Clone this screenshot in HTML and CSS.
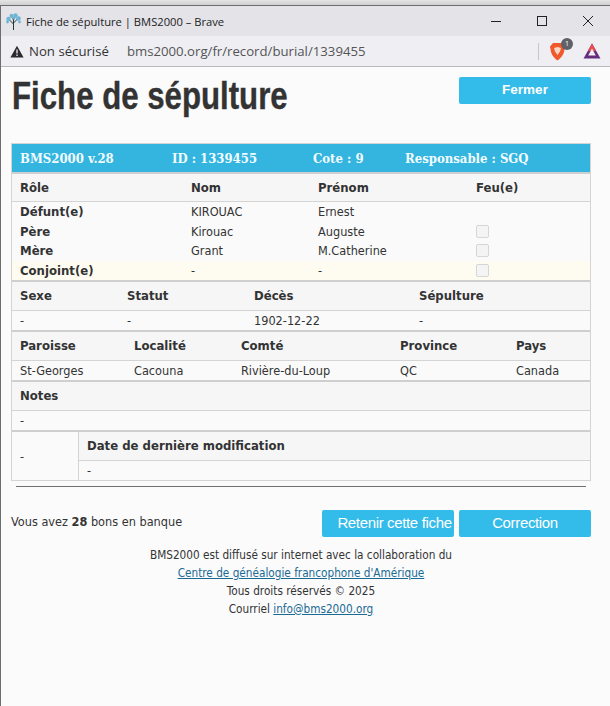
FILE: index.html
```html
<!DOCTYPE html>
<html lang="fr">
<head>
    <meta charset="UTF-8">
    <meta name="viewport" content="width=device-width, initial-scale=1.0">
    <title>Fiche de sépulture | BMS2000</title>
    <link rel="stylesheet" href="styles.css">
</head>
<body>
    <div class="window">
        <div class="titlebar">
            <svg class="favicon" width="17" height="17" viewBox="0 0 17 17">
                <path d="M8.5 17V7M8.5 11L4.5 7M8.5 10L12.5 6M8.5 7L6.5 3.5M8.5 7L10.5 3" stroke="#26343a" stroke-width="1" fill="none"/>
                <g fill="#6fb5d6">
                    <circle cx="3.5" cy="6" r="2.2"/><circle cx="6.5" cy="2.8" r="2"/><circle cx="10.5" cy="2.5" r="2.2"/>
                    <circle cx="13.5" cy="5.5" r="2.3"/><circle cx="2.5" cy="9" r="1.4"/><circle cx="14.5" cy="9" r="1.4"/>
                    <circle cx="8.5" cy="5" r="1.5"/>
                </g>
            </svg>
            <span class="window-title">Fiche de sépulture | BMS2000 – Brave</span>
            <div class="controls">
                <svg width="12" height="12" viewBox="0 0 12 12"><path d="M1 6.5H11" stroke="#222" stroke-width="1"/></svg>
                <svg width="12" height="12" viewBox="0 0 12 12"><rect x="1.5" y="1.5" width="9" height="9" fill="none" stroke="#222" stroke-width="1"/></svg>
                <svg width="12" height="12" viewBox="0 0 12 12"><path d="M1 1L11 11M11 1L1 11" stroke="#222" stroke-width="1"/></svg>
            </div>
        </div>
        <div class="addressbar">
            <svg class="warning" width="14" height="13" viewBox="0 0 14 13"><path d="M7 0.8L13.6 12.4H0.4Z" fill="#2b2b2e"/><path d="M7 4.5V8.5M7 9.6V11" stroke="#eeeef3" stroke-width="1.3"/></svg>
            <span class="not-secure">Non sécurisé</span>
            <span class="url">bms2000.org/fr/record/burial/1339455</span>
            <div class="extensions">
                <span class="divider"></span>
                <div class="shield-wrap">
                    <svg width="17" height="19" viewBox="0 0 17 19"><path d="M4 1H13L16 4.5L15 10C14 14 11 16.5 8.5 18.5C6 16.5 3 14 2 10L1 4.5Z" fill="#f0592b"/><path d="M5 6L8.5 5L12 6L11 9.5L8.5 13L6 9.5Z" fill="#fbd5c6"/></svg>
                    <span class="shield-badge">1</span>
                </div>
                <svg class="bat" width="18" height="16" viewBox="0 0 18 16">
                    <path d="M9 0.5L17.5 15.5H0.5Z" fill="#662d7f"/>
                    <path d="M9 0.5L13.2 8H4.8Z" fill="#e94b4f"/>
                    <path d="M9 5.5L12.8 12.5H5.2Z" fill="#eeeef3"/>
                </svg>
            </div>
        </div>
        <div class="page">
            <div class="page-head">
                <h1>Fiche de sépulture</h1>
                <a class="btn btn-bold">Fermer</a>
            </div>

            <div class="record">
                <div class="record-bar">
                    <span class="bar-a">BMS2000 v.28</span>
                    <span class="bar-b">ID : 1339455</span>
                    <span class="bar-c">Cote : 9</span>
                    <span>Responsable : SGQ</span>
                </div>

                <div class="cols people head">
                    <b>Rôle</b><b>Nom</b><b>Prénom</b><b>Feu(e)</b>
                </div>
                <div class="cols people row row-tall">
                    <b>Défunt(e)</b><span>KIROUAC</span><span>Ernest</span><span></span>
                </div>
                <div class="cols people row">
                    <b>Père</b><span>Kirouac</span><span>Auguste</span><span><i class="check"></i></span>
                </div>
                <div class="cols people row row-tall">
                    <b>Mère</b><span>Grant</span><span>M.Catherine</span><span><i class="check"></i></span>
                </div>
                <div class="cols people row spouse">
                    <b>Conjoint(e)</b><span>-</span><span>-</span><span><i class="check"></i></span>
                </div>

                <div class="cols dates head head-low">
                    <b>Sexe</b><b>Statut</b><b>Décès</b><b>Sépulture</b>
                </div>
                <div class="cols dates row">
                    <span>-</span><span>-</span><span>1902-12-22</span><span>-</span>
                </div>

                <div class="cols places head head-low">
                    <b>Paroisse</b><b>Localité</b><b>Comté</b><b>Province</b><b>Pays</b>
                </div>
                <div class="cols places row">
                    <span>St-Georges</span><span>Cacouna</span><span>Rivière-du-Loup</span><span>QC</span><span>Canada</span>
                </div>

                <div class="cols head head-low"><b>Notes</b></div>
                <div class="cols row"><span>-</span></div>

                <div class="modified">
                    <div class="modified-side">-</div>
                    <div class="modified-main">
                        <div class="cols head head-low"><b>Date de dernière modification</b></div>
                        <div class="cols row"><span>-</span></div>
                    </div>
                </div>
            </div>

            <hr class="rule">

            <div class="actions">
                <p class="credits">Vous avez <b>28</b> bons en banque</p>
                <div class="action-btns">
                    <a class="btn btn-wide">Retenir cette fiche</a>
                    <a class="btn">Correction</a>
                </div>
            </div>

            <div class="footer">
                <div>BMS2000 est diffusé sur internet avec la collaboration du</div>
                <div><a href="#">Centre de généalogie francophone d'Amérique</a></div>
                <div>Tous droits réservés © 2025</div>
                <div>Courriel <a href="#">info@bms2000.org</a></div>
            </div>
        </div>
    </div>
</body>
</html>
```
FILE: styles.css
```css
html, body {
    margin: 0;
    height: 100%;
    overflow: hidden;
}
body {
    background-color: #fbfbfc;
    font-family: "DejaVu Sans Condensed", "DejaVu Sans", sans-serif;
    font-size: 12.6px;
    color: #333;
    padding-top: 5px;
    box-sizing: border-box;
    background-image: linear-gradient(#e4e4e4, #cfcfcf);
    background-size: 100% 5px;
    background-repeat: no-repeat;
}
.window {
    height: 100%;
    border-top: 1px solid #6d6d6d;
    border-left: 1px solid #6d6d6d;
    background-color: #fbfbfc;
    box-sizing: border-box;
}

/* browser chrome */
.titlebar {
    height: 30px;
    background-color: #e3e3e8;
    display: flex;
    align-items: center;
    padding-left: 4px;
}
.favicon {
    margin-right: 4px;
}
.window-title {
    font-family: "Open Sans", sans-serif;
    font-size: 11.2px;
    color: #222;
}
.controls {
    margin-left: auto;
    display: flex;
    gap: 34px;
    padding-right: 16px;
}
.addressbar {
    height: 30px;
    background-color: #eeeef3;
    border-bottom: 1px solid #b9b9bd;
    display: flex;
    align-items: center;
    padding-left: 9px;
    font-family: "Open Sans", sans-serif;
    font-size: 13.2px;
    color: #333;
}
.not-secure {
    margin-left: 5px;
}
.url {
    margin-left: 18px;
    color: #555;
}
.extensions {
    margin-left: auto;
    display: flex;
    align-items: center;
    padding-right: 9px;
}
.divider {
    width: 1px;
    height: 17px;
    background-color: #c5c5ca;
    margin-right: 10px;
}
.shield-wrap {
    position: relative;
    display: flex;
    margin-right: 17px;
}
.shield-badge {
    position: absolute;
    top: -4px;
    right: -7px;
    width: 12px;
    height: 12px;
    border-radius: 50%;
    background-color: #5f6068;
    color: #fff;
    font-size: 7px;
    line-height: 12px;
    text-align: center;
}

/* page */
.page {
    padding: 0 19px 0 10px;
}
.page-head {
    display: flex;
    justify-content: space-between;
    align-items: flex-start;
    height: 76px;
}
h1 {
    margin: 6px 0 0 1px;
    font-family: "Liberation Sans", sans-serif;
    font-size: 39px;
    line-height: 46px;
    font-weight: bold;
    color: #333;
    white-space: nowrap;
    transform: scaleX(0.8);
    transform-origin: left center;
    -webkit-text-stroke: 0.4px #333;
}
.btn {
    display: block;
    width: 132px;
    height: 27px;
    line-height: 26px;
    border-radius: 2px;
    background-color: #33bbea;
    color: #fff;
    text-align: center;
    font-family: "Liberation Sans", sans-serif;
    font-size: 15px;
    letter-spacing: -0.35px;
    white-space: nowrap;
}
.page-head .btn {
    margin-top: 10px;
}
.btn-bold {
    font-weight: bold;
    font-size: 13.5px;
    letter-spacing: 0;
}
.btn-wide {
    box-sizing: border-box;
    padding-left: 13px;
}

/* record table */
.record {
    border: 1px solid #d4d4d4;
}
.record-bar {
    height: 28px;
    background-color: #33b5e0;
    color: #f2fbfe;
    font-family: "DejaVu Serif Condensed", "DejaVu Serif", serif;
    font-weight: bold;
    font-size: 13px;
    display: flex;
    align-items: center;
    padding-left: 8px;
}
.bar-a { width: 152px; }
.bar-b { width: 141px; }
.bar-c { width: 92px; }
.cols {
    display: grid;
    padding-left: 8px;
    align-items: center;
}
.people { grid-template-columns: 171px 127px 158px 1fr; }
.dates { grid-template-columns: 107px 127px 165px 1fr; }
.places { grid-template-columns: 114px 107px 159px 116px 1fr; }
.head {
    height: 27px;
    background-color: #f6f6f7;
    border-top: 2px solid #cfcfcf;
    border-bottom: 1px solid #d4d4d4;
    font-size: 13px;
}
.head-low {
    padding-bottom: 1px;
}
.row {
    height: 19px;
    line-height: 19px;
    background-color: #fafafb;
    align-items: start;
}
.row-tall {
    height: 20px;
}
.row b {
    font-size: 13px;
}
.spouse {
    background-color: #fefcf0;
}
.check {
    display: block;
    width: 11px;
    height: 11px;
    margin-top: 3px;
    background-color: #f4f4f5;
    border: 1px solid #d6d6d6;
    border-radius: 2px;
}
.modified {
    display: flex;
    border-top: 2px solid #cfcfcf;
}
.modified-side {
    width: 58px;
    flex: none;
    padding-left: 8px;
    border-right: 1px solid #d4d4d4;
    display: flex;
    align-items: center;
    background-color: #fafafb;
}
.modified-main {
    flex: 1;
}
.modified-main .head {
    border-top: 0;
}

.rule {
    margin: 5px 5px 0 5px;
    border: 0;
    border-top: 1px solid #707070;
}
.actions {
    display: flex;
    justify-content: space-between;
    margin-top: 23px;
}
.credits {
    margin: 4px 0 0;
}
.action-btns {
    display: flex;
    gap: 5px;
}
.footer {
    margin-top: 9px;
    text-align: center;
    font-size: 11.7px;
    line-height: 18px;
}
.footer a {
    color: #1a6a94;
}
```
